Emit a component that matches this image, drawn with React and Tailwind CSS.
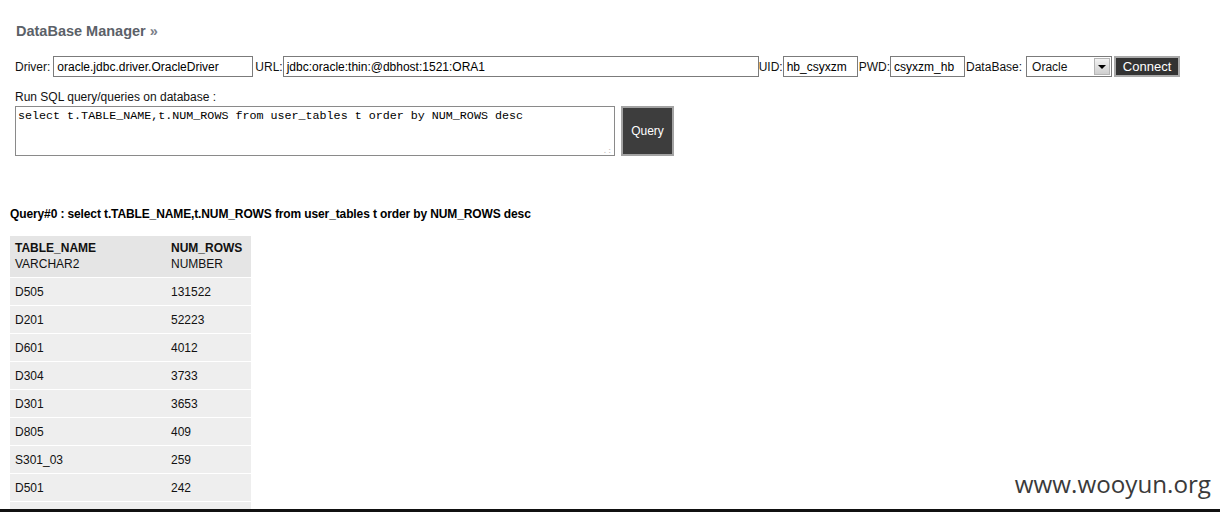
import React from 'react';

const rows = [
    ['D505', '131522'],
    ['D201', '52223'],
    ['D601', '4012'],
    ['D304', '3733'],
    ['D301', '3653'],
    ['D805', '409'],
    ['S301_03', '259'],
    ['D501', '242'],
];

const Field = ({ value, className }) => (
    <div className={`h-[21px] border border-[#7b7b7b] bg-white pl-[3px] flex items-center text-[12px] text-black ${className}`}>
        {value}
    </div>
);

const App = () => {
    return (
        <div className="relative h-[512px] overflow-hidden bg-white font-['Liberation_Sans',Arial,sans-serif] text-[12px] text-[#111]">
            {/* titre */}
            <div className="mt-[22px] pl-[16px] text-[14.5px] leading-[18px] font-bold text-[#5b6168]">
                DataBase Manager <span className="text-[#7a8088]">»</span>
            </div>

            {/* ligne de connexion */}
            <div className="mt-[16px] pl-[15px] flex items-center">
                <span className="mr-[3px]">Driver:</span>
                <Field value="oracle.jdbc.driver.OracleDriver" className="w-[200px]" />
                <span className="ml-[2px]">URL:</span>
                <Field value="jdbc:oracle:thin:@dbhost:1521:ORA1" className="w-[476px]" />
                <span>UID:</span>
                <Field value="hb_csyxzm" className="w-[75px]" />
                <span className="ml-[1px]">PWD:</span>
                <Field value="csyxzm_hb" className="w-[75px]" />
                <span className="ml-[1px] mr-[4px]">DataBase:</span>
                <div className="w-[86px] h-[21px] border border-[#7b7b7b] bg-white flex items-center">
                    <span className="flex-1 pl-[5px]">Oracle</span>
                    <div className="w-[16px] h-[17px] mr-[1px] border border-[#b5b5b5] bg-gradient-to-b from-[#f2f2f2] to-[#cfcfcf] flex items-center justify-center">
                        <div className="w-0 h-0 border-l-[4px] border-r-[4px] border-t-[4px] border-l-transparent border-r-transparent border-t-black" />
                    </div>
                </div>
                <button className="ml-[2px] w-[66px] h-[21px] bg-[#333333] border-2 border-[#a9a9a9] text-white text-[13px] leading-none">
                    Connect
                </button>
            </div>

            {/* requête */}
            <div className="mt-[13px] pl-[15px] leading-[14px]">Run SQL query/queries on database :</div>
            <div className="mt-[2px] pl-[15px] flex gap-[6px]">
                <div className="relative w-[600px] h-[50px] border border-[#8a8a8a] bg-white pl-[2px] pt-[2px] font-['Liberation_Mono','Courier_New',monospace] text-[11.7px] leading-[14px] text-black">
                    select t.TABLE_NAME,t.NUM_ROWS from user_tables t order by NUM_ROWS desc
                    <span className="absolute right-[2px] bottom-0 text-[8px] leading-[8px] text-[#bbb]">.:</span>
                </div>
                <button className="w-[53px] h-[50px] bg-[#3d3d3d] border-2 border-[#a3a3a3] text-white text-[12px]">
                    Query
                </button>
            </div>

            {/* résultat */}
            <div className="mt-[51px] pl-[10px] font-bold leading-[14px] tracking-[-0.12px] text-black">
                Query#0 : select t.TABLE_NAME,t.NUM_ROWS from user_tables t order by NUM_ROWS desc
            </div>
            <div className="mt-[15px] ml-[10px] w-[241px] bg-[#eeeeee] text-[#111]">
                <div className="flex h-[42px] pt-[4px] bg-[#e5e5e5] border-b border-white leading-[16px]">
                    <div className="w-[156px] pl-[5px]">
                        <div className="font-bold">TABLE_NAME</div>
                        <div>VARCHAR2</div>
                    </div>
                    <div className="flex-1 pl-[5px]">
                        <div className="font-bold">NUM_ROWS</div>
                        <div>NUMBER</div>
                    </div>
                </div>
                {rows.map(([name, num]) => (
                    <div key={name} className="flex items-center h-[28px] border-b border-white">
                        <div className="w-[156px] pl-[5px]">{name}</div>
                        <div className="flex-1 pl-[5px]">{num}</div>
                    </div>
                ))}
                <div className="h-[28px]" />
            </div>

            {/* filigrane */}
            <div className="absolute right-[9px] bottom-[13px] font-['Open_Sans',sans-serif] text-[24.2px] leading-[30px] text-[#3a3a3a]">
                www.wooyun.org
            </div>
            <div className="absolute left-0 right-0 bottom-0 h-[3px] bg-[#111]" />
        </div>
    );
};

export default App;
